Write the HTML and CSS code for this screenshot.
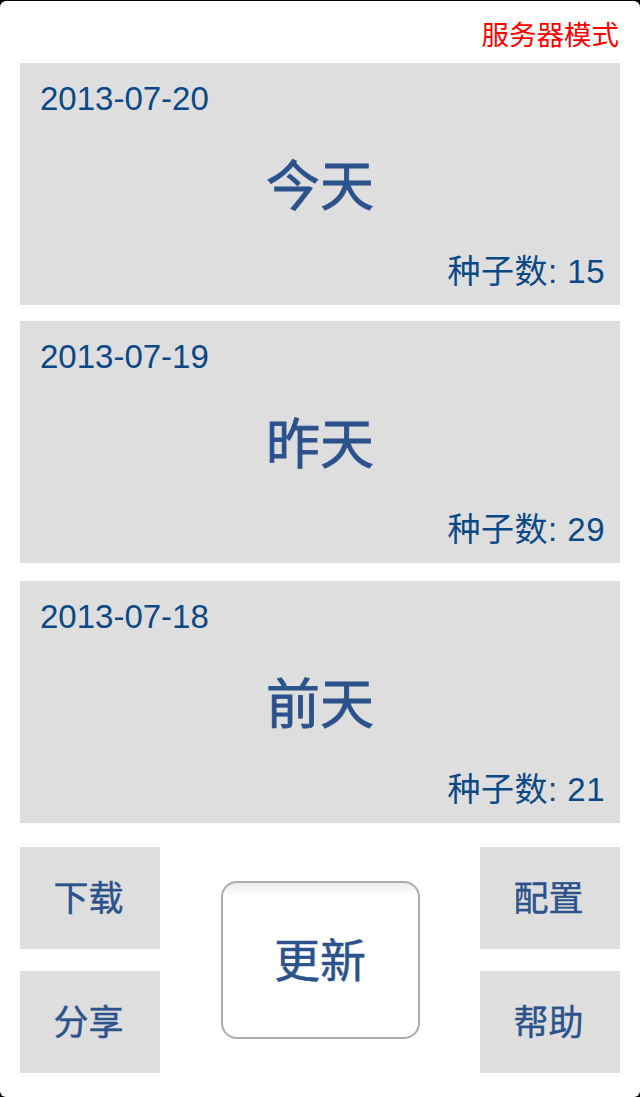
FILE: index.html
```html
<!DOCTYPE html>
<html lang="zh-CN">
<head>
<meta charset="utf-8">
<title>种子</title>
<link rel="stylesheet" href="styles.css">
</head>
<body>
<div class="screen">
  <header class="header"><span class="mode">服务器模式</span></header>
  <main class="cards">
    <section class="card">
      <div class="date">2013-07-20</div>
      <div class="day">今天</div>
      <div class="count">种子数: 15</div>
    </section>
    <section class="card">
      <div class="date">2013-07-19</div>
      <div class="day">昨天</div>
      <div class="count">种子数: 29</div>
    </section>
    <section class="card card-last">
      <div class="date">2013-07-18</div>
      <div class="day">前天</div>
      <div class="count">种子数: 21</div>
    </section>
  </main>
  <nav class="actions">
    <div class="btn btn-dl">下载</div>
    <div class="btn btn-share">分享</div>
    <div class="update">更新</div>
    <div class="btn btn-cfg">配置</div>
    <div class="btn btn-help">帮助</div>
  </nav>
</div>
</body>
</html>
```
FILE: styles.css
```css
html, body {
  margin: 0;
  padding: 0;
  background: #000;
}
body {
  font-family: "Liberation Sans", "Noto Sans CJK SC", sans-serif;
}
.screen {
  margin-top: 1px;
  height: 1096px;
  background: #fff;
  border-radius: 6px;
  padding: 0 20px;
  box-sizing: border-box;
  display: flex;
  flex-direction: column;
}
.header {
  height: 62px;
  display: flex;
  justify-content: flex-end;
  align-items: center;
}
.mode {
  color: #ff0000;
  font-family: "Noto Sans CJK SC", sans-serif;
  font-size: 27.5px;
  line-height: 30px;
  margin-right: 1px;
  margin-top: 2px;
}
.cards {
  display: flex;
  flex-direction: column;
  gap: 16px;
}
.card-last {
  margin-top: 2px;
}
.card {
  height: 242px;
  background: #dedede;
  display: grid;
  grid-template: 1fr / 1fr;
  padding: 18px 15px 15px 20px;
  box-sizing: border-box;
}
.card > div {
  grid-area: 1 / 1;
}
.date {
  align-self: start;
  justify-self: start;
  font-size: 33px;
  line-height: 36px;
  color: #0b4886;
}
.day {
  align-self: center;
  justify-self: center;
  margin-left: -5px;
  margin-bottom: 6px;
  font-family: "Noto Sans CJK SC", sans-serif;
  font-size: 54px;
  line-height: 60px;
  color: #2c528c;
  font-weight: 400;
  -webkit-text-stroke: 0.8px #2c528c;
}
.count {
  align-self: end;
  justify-self: end;
  font-size: 33px;
  line-height: 36px;
  color: #0b4886;
  letter-spacing: 0.5px;
}
.actions {
  margin-top: 24px;
  display: grid;
  grid-template-columns: 140px 1fr 140px;
  grid-template-rows: 102px 102px;
  row-gap: 22px;
}
.btn {
  background: #dedede;
  display: flex;
  align-items: center;
  justify-content: center;
  padding: 0 3px 6px 0;
  box-sizing: border-box;
  font-family: "Noto Sans CJK SC", sans-serif;
  font-size: 35px;
  color: #2c528c;
  -webkit-text-stroke: 0.4px #2c528c;
}
.btn-dl { grid-column: 1; grid-row: 1; }
.btn-share { grid-column: 1; grid-row: 2; }
.btn-cfg { grid-column: 3; grid-row: 1; }
.btn-help { grid-column: 3; grid-row: 2; }
.update {
  grid-column: 2;
  grid-row: 1 / 3;
  align-self: center;
  justify-self: center;
  width: 199px;
  height: 158px;
  box-sizing: border-box;
  padding-bottom: 6px;
  border: 2px solid #acacac;
  border-radius: 16px;
  background: linear-gradient(#ececec, #fff 8%, #fff);
  display: flex;
  align-items: center;
  justify-content: center;
  font-family: "Noto Sans CJK SC", sans-serif;
  font-size: 46px;
  color: #2c528c;
  -webkit-text-stroke: 0.5px #2c528c;
}
```
